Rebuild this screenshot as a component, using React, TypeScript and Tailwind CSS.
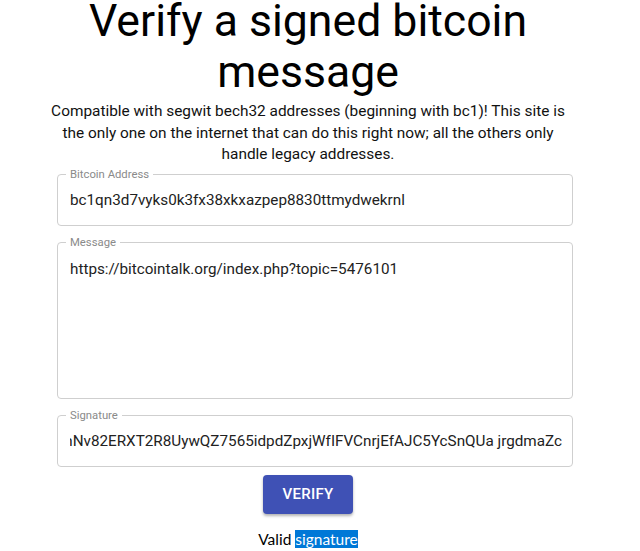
import React from "react";

type FieldProps = {
    label: string;
    children: React.ReactNode;
    className?: string;
};

const Field = ({label, children, className}: FieldProps) => {
    return (
        <div className={"relative border border-[#cfcfcf] rounded-[4px] pl-3 " + (className ?? "pr-3")}>
            <span className="absolute -top-[8px] left-2 bg-white px-1 text-[11.3px] leading-[16px] text-[#8a8a8a]">
                {label}
            </span>
            {children}
        </div>
    );
};

const App = () => {
    return (
        <div className="w-[616px] bg-white flex flex-col items-center text-center font-['Roboto',sans-serif]">
            <h1 className="w-[520px] mt-[-4px] text-[44.6px] leading-[51px] font-normal text-black">
                Verify a signed bitcoin message
            </h1>
            <p className="w-[520px] mt-[3px] text-[15.4px] leading-[21.7px] text-[#111]">
                Compatible with segwit bech32 addresses (beginning with bc1)! This site is the only one on the
                internet that can do this right now; all the others only handle legacy addresses.
            </p>

            <div className="self-start ml-[57px] w-[516px] mt-[8px] flex flex-col gap-4 text-left">
                <Field label="Bitcoin Address" className="h-[52px] pr-3 flex items-center">
                    <span className="text-[15.25px] text-[#222] whitespace-nowrap">
                        bc1qn3d7vyks0k3fx38xkxazpep8830ttmydwekrnl
                    </span>
                </Field>
                <Field label="Message" className="h-[157px] pr-3 pt-[17px]">
                    <p className="text-[15.25px] leading-[19px] text-[#222]">
                        https://bitcointalk.org/index.php?topic=5476101
                    </p>
                </Field>
                <Field label="Signature" className="h-[52px] pr-[10px] flex items-center">
                    <div className="w-full overflow-hidden flex justify-end">
                        <span className="text-[15.25px] text-[#222] whitespace-nowrap">
                            H3EmNv82ERXT2R8UywQZ7565idpdZpxjWfIFVCnrjEfAJC5YcSnQUa jrgdmaZc
                        </span>
                    </div>
                </Field>
            </div>

            <button
                className="mt-[8px] w-[90px] h-[39px] rounded-[4px] bg-[#3f51b5] text-white text-[15px] font-medium uppercase tracking-[0.3px] shadow-[0_2px_3px_rgba(0,0,0,0.3)]">
                Verify
            </button>

            <p className="mt-[17px] text-[15.5px] leading-[17px] text-black font-['Lato',sans-serif]">
                Valid <span className="bg-[#0078d7] text-white">signature</span>
            </p>
        </div>
    );
};

export default App;
